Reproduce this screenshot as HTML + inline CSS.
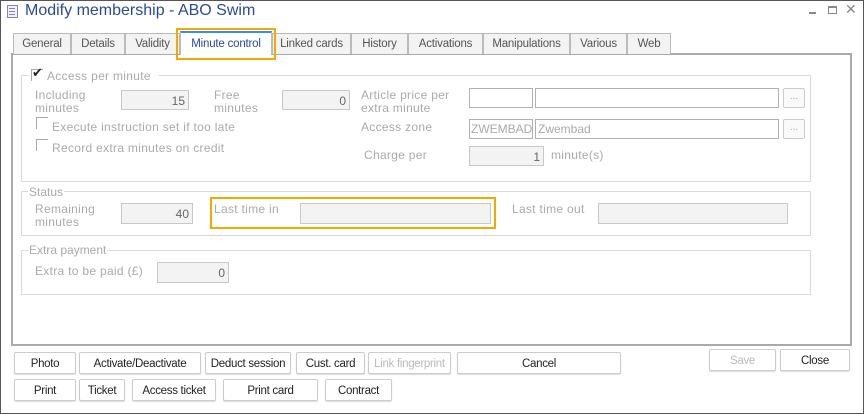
<!DOCTYPE html><html><head><style>
*{box-sizing:border-box;margin:0;padding:0}
body{width:864px;height:414px;background:#fff;font-family:"Liberation Sans",sans-serif;font-size:12px;position:relative;overflow:hidden}
.a{position:absolute}
.win{left:0;top:0;width:864px;height:414px;border:1px solid #555}
.tab{position:absolute;top:33px;height:21px;border:1px solid #bbb;border-bottom:none;background:#f3f3f3;color:#555;font-size:11.5px;text-align:center;line-height:21px;letter-spacing:-.2px}
.grp{position:absolute;border:1px solid #dadada}
.gt{position:absolute;background:#fff;color:#aaa;padding:0 1px;font-size:12px}
.l{position:absolute;color:#aaa;font-size:12px;line-height:13px;letter-spacing:.3px}
.in{position:absolute;border:1px solid #c8c8c8;background:#f3f3f3;color:#666;text-align:right;padding-right:3px;font-size:12px;line-height:20px}
.iw{background:#fff;border-color:#b0b0b0;text-align:left;padding-left:2px;color:#aaa;line-height:18px}
.dot{position:absolute;border:1px solid #ccc;border-radius:2px;background:#fafafa;color:#aaa;text-align:center;font-size:10px;line-height:16px}
.cb{position:absolute;width:12px;height:12px;border-left:1px solid #aaa;border-top:1px solid #aaa}
.b{position:absolute;height:22px;border:1px solid #ccc;border-radius:2px;background:#fff;box-shadow:0 1px 1px #ddd;color:#222;font-size:11.5px;text-align:center;line-height:22px;letter-spacing:-.3px}
</style></head><body>
<div class="a win"></div>
<div class="a" style="left:7px;top:5px;width:11px;height:13px;border:1px solid #889;background:#eef"></div>
<div class="a" style="left:9px;top:8px;width:6px;height:1px;background:#889;box-shadow:0 3px #889,0 6px #889"></div>
<div class="a" style="left:25px;top:2px;font-size:16px;color:#2a4a9a">Modify membership - ABO Swim</div>
<div class="a" style="left:809px;top:12px;width:7px;height:2px;background:#888"></div>
<div class="a" style="left:828px;top:6px;width:9px;height:8px;border:1px solid #888;border-top-width:2px"></div>
<div class="a" style="left:845px;top:1px;color:#888;font-size:14px">✕</div>
<div class="a" style="left:11px;top:53px;width:841px;height:293px;border:2px solid #aaa"></div>
<div class="tab" style="left:13px;width:58px">General</div>
<div class="tab" style="left:71px;width:54px">Details</div>
<div class="tab" style="left:125px;width:55px">Validity</div>
<div class="tab" style="left:180px;top:31px;height:24px;width:92px;background:#fff;border-top:2px solid #3a8ee6;color:#2a4a9a;line-height:22px">Minute control</div>
<div class="tab" style="left:272px;width:79px">Linked cards</div>
<div class="tab" style="left:351px;width:57px">History</div>
<div class="tab" style="left:408px;width:75px">Activations</div>
<div class="tab" style="left:483px;width:87px">Manipulations</div>
<div class="tab" style="left:570px;width:57px">Various</div>
<div class="tab" style="left:627px;width:44px">Web</div>
<div class="a" style="left:176px;top:28px;width:100px;height:32px;border:2px solid #f4a800"></div>

<div class="grp" style="left:21px;top:75px;width:790px;height:107px"></div>
<div class="gt" style="left:29px;top:68px;width:130px;height:14px"></div>
<div class="cb" style="left:31px;top:69px"></div>
<div class="a" style="left:32px;top:65px;font-size:13px;color:#222">✔</div>
<div class="l" style="left:47px;top:70px">Access per minute</div>
<div class="l" style="left:35px;top:89px">Including<br>minutes</div>
<div class="in" style="left:121px;top:90px;width:68px;height:20px">15</div>
<div class="l" style="left:214px;top:89px">Free<br>minutes</div>
<div class="in" style="left:282px;top:90px;width:68px;height:20px">0</div>
<div class="l" style="left:361px;top:89px">Article price per<br>extra minute</div>
<div class="in iw" style="left:469px;top:88px;width:64px;height:20px"></div>
<div class="in iw" style="left:535px;top:88px;width:244px;height:20px"></div>
<div class="dot" style="left:783px;top:88px;width:22px;height:20px">...</div>
<div class="cb" style="left:36px;top:117px"></div>
<div class="l" style="left:52px;top:121px">Execute instruction set if too late</div>
<div class="l" style="left:361px;top:121px">Access zone</div>
<div class="in iw" style="left:469px;top:119px;width:64px;height:20px;padding-left:1px">ZWEMBAD</div>
<div class="in iw" style="left:535px;top:119px;width:244px;height:20px">Zwembad</div>
<div class="dot" style="left:783px;top:119px;width:22px;height:20px">...</div>
<div class="cb" style="left:36px;top:139px"></div>
<div class="l" style="left:52px;top:142px">Record extra minutes on credit</div>
<div class="l" style="left:364px;top:149px">Charge per</div>
<div class="in" style="left:469px;top:146px;width:75px;height:20px">1</div>
<div class="l" style="left:551px;top:149px">minute(s)</div>

<div class="grp" style="left:21px;top:191px;width:790px;height:45px"></div>
<div class="gt" style="left:28px;top:185px">Status</div>
<div class="l" style="left:35px;top:203px">Remaining<br>minutes</div>
<div class="in" style="left:121px;top:203px;width:72px;height:21px">40</div>
<div class="a" style="left:210px;top:197px;width:286px;height:32px;border:2px solid #f4a800"></div>
<div class="l" style="left:214px;top:203px">Last time in</div>
<div class="in" style="left:300px;top:203px;width:191px;height:21px"></div>
<div class="l" style="left:512px;top:203px">Last time out</div>
<div class="in" style="left:598px;top:203px;width:190px;height:21px"></div>

<div class="grp" style="left:21px;top:250px;width:790px;height:45px"></div>
<div class="gt" style="left:28px;top:243px">Extra payment</div>
<div class="l" style="left:35px;top:265px">Extra to be paid (£)</div>
<div class="in" style="left:157px;top:262px;width:72px;height:21px">0</div>

<div class="b" style="left:14px;top:352px;width:62px">Photo</div>
<div class="b" style="left:79px;top:352px;width:122px">Activate/Deactivate</div>
<div class="b" style="left:205px;top:352px;width:86px">Deduct session</div>
<div class="b" style="left:296px;top:352px;width:69px">Cust. card</div>
<div class="b" style="left:368px;top:352px;width:83px;color:#bbb">Link fingerprint</div>
<div class="b" style="left:457px;top:352px;width:164px">Cancel</div>
<div class="b" style="left:709px;top:349px;width:67px;color:#bbb">Save</div>
<div class="b" style="left:780px;top:349px;width:70px">Close</div>
<div class="b" style="left:14px;top:379px;width:62px">Print</div>
<div class="b" style="left:79px;top:379px;width:46px">Ticket</div>
<div class="b" style="left:132px;top:379px;width:84px">Access ticket</div>
<div class="b" style="left:223px;top:379px;width:95px">Print card</div>
<div class="b" style="left:325px;top:379px;width:67px">Contract</div>
</body></html>
